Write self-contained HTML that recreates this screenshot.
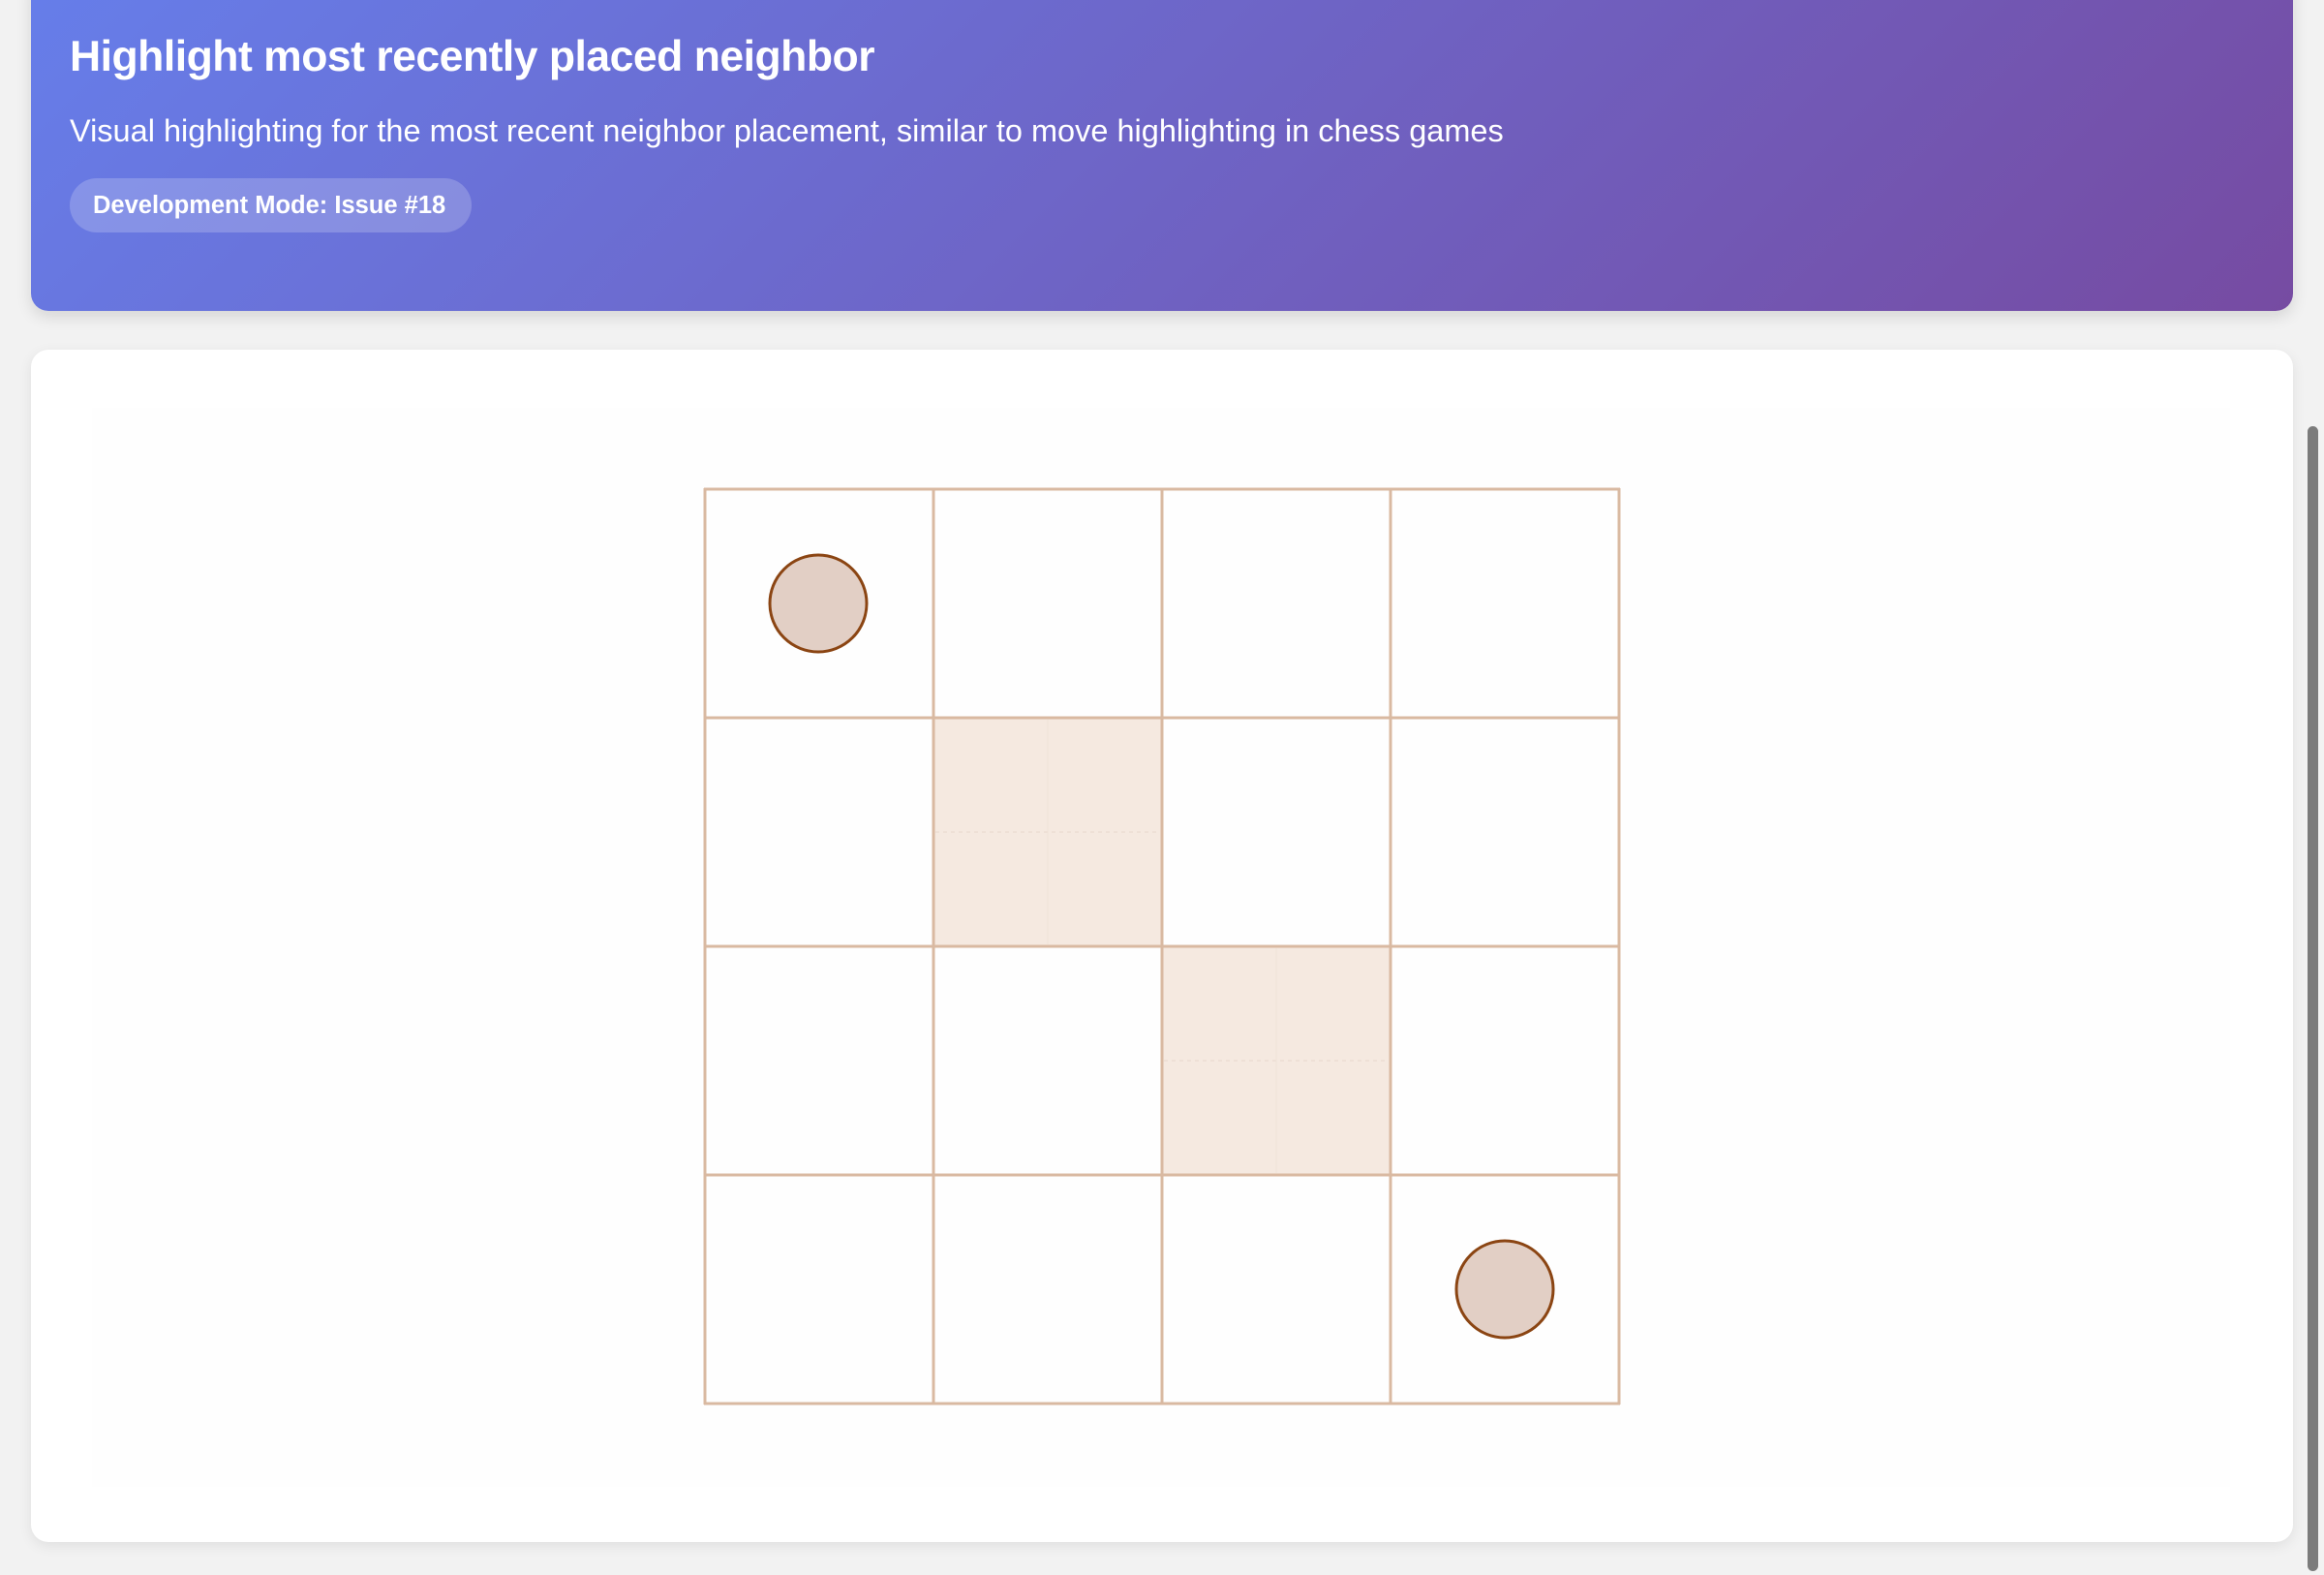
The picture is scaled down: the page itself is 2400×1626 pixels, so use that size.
<!DOCTYPE html>
<html><head><meta charset="utf-8"><style>
html,body{margin:0;padding:0;}
body{width:2400px;height:1626px;background:#f2f2f2;position:relative;overflow:hidden;font-family:"Liberation Sans",sans-serif;}
.hdr{position:absolute;left:32px;top:-30px;width:2336px;height:351px;border-radius:18px;background:linear-gradient(135deg,#667eea 0%,#764ba2 100%);box-shadow:0 6px 16px rgba(0,0,0,0.12);color:#fff;}
.hdr h1{position:absolute;left:40px;top:64px;margin:0;font-size:44.5px;font-weight:bold;letter-spacing:-0.5px;white-space:nowrap;}
.hdr p{position:absolute;left:40px;top:147px;margin:0;font-size:32.5px;white-space:nowrap;}
.badge{position:absolute;left:40px;top:214px;width:415px;height:56px;border-radius:28px;background:rgba(255,255,255,0.2);font-size:25.5px;font-weight:bold;line-height:56px;box-sizing:border-box;padding-left:24px;white-space:nowrap;}
.card{position:absolute;left:32px;top:361px;width:2336px;height:1231px;border-radius:18px;background:#fff;box-shadow:0 4px 14px rgba(0,0,0,0.08);}
.inner{position:absolute;left:95px;top:421px;width:2208px;height:1114px;background:#fefefe;}
.sb{position:absolute;left:2383px;top:440px;width:11px;height:1182px;border-radius:6px;background:#7b7b7b;}
</style></head><body>
<div class="hdr">
<h1>Highlight most recently placed neighbor</h1>
<p>Visual highlighting for the most recent neighbor placement, similar to move highlighting in chess games</p>
<div class="badge">Development Mode: Issue #18</div>
</div>
<div class="card"></div>
<div class="inner"></div>
<svg style="position:absolute;left:0;top:0" width="2400" height="1626">
<rect x="964" y="741" width="236" height="236" fill="#f5e9e0"/>
<rect x="1200" y="977" width="236" height="236" fill="#f5e9e0"/>
<g stroke="#e8d8cc" stroke-width="1" stroke-dasharray="4,4">
<line x1="966" y1="859" x2="1198" y2="859"/><line x1="1202" y1="1095" x2="1434" y2="1095"/>
</g>
<g stroke="#efe2d8" stroke-width="1">
<line x1="1082" y1="743" x2="1082" y2="975"/><line x1="1318" y1="979" x2="1318" y2="1211"/>
</g>
<g stroke="#d9b9a1" stroke-width="3">
<line x1="728" y1="504" x2="728" y2="1450"/><line x1="964" y1="504" x2="964" y2="1450"/>
<line x1="1200" y1="504" x2="1200" y2="1450"/><line x1="1436" y1="504" x2="1436" y2="1450"/>
<line x1="1672" y1="504" x2="1672" y2="1450"/>
<line x1="727" y1="505" x2="1673" y2="505"/><line x1="727" y1="741" x2="1673" y2="741"/>
<line x1="727" y1="977" x2="1673" y2="977"/><line x1="727" y1="1213" x2="1673" y2="1213"/>
<line x1="727" y1="1449" x2="1673" y2="1449"/>
</g>
<circle cx="845" cy="623" r="50" fill="#e2cfc5" stroke="#8b4513" stroke-width="3"/>
<circle cx="1554" cy="1331" r="50" fill="#e2cfc5" stroke="#8b4513" stroke-width="3"/>
</svg>
<div class="sb"></div>
</body></html>
